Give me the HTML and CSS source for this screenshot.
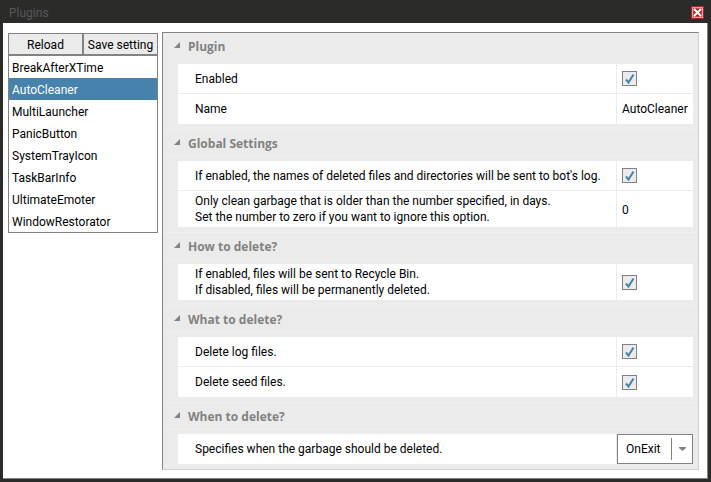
FILE: index.html
```html
<!DOCTYPE html>
<html lang="en">
<head>
<meta charset="utf-8">
<title>Plugins</title>
<link rel="stylesheet" href="styles.css">
</head>
<body>
<div class="window">
  <header class="titlebar">
    <h1>Plugins</h1>
    <button class="close" type="button" aria-label="Close">
      <svg viewBox="0 0 13 13" width="13" height="13">
        <rect x=".5" y=".5" width="12" height="12" fill="#c44a48" stroke="#a02a2a"/>
        <rect x="1.5" y="1.5" width="10" height="10" fill="none" stroke="#e39a98"/>
        <path d="M4 4l5 5M9 4l-5 5" stroke="#7d2526" stroke-width="4"/>
        <path d="M3 3l7 7M10 3l-7 7" stroke="#fff" stroke-width="2"/>
      </svg>
    </button>
  </header>
  <main class="content">
    <aside class="sidebar">
      <div class="actions">
        <button type="button">Reload</button>
        <button type="button">Save setting</button>
      </div>
      <ul class="plugins">
        <li>BreakAfterXTime</li>
        <li class="selected">AutoCleaner</li>
        <li>MultiLauncher</li>
        <li>PanicButton</li>
        <li>SystemTrayIcon</li>
        <li>TaskBarInfo</li>
        <li>UltimateEmoter</li>
        <li>WindowRestorator</li>
      </ul>
    </aside>
    <div class="panel">
      <section>
        <h2><svg class="arrow" viewBox="0 0 6 6"><path d="M6 0v6H0z"/></svg>Plugin</h2>
        <div class="rows">
          <div class="row"><label for="enabled">Enabled</label><div class="value"><input id="enabled" type="checkbox" checked></div></div>
          <div class="row"><span class="name">Name</span><div class="value">AutoCleaner</div></div>
        </div>
      </section>
      <section>
        <h2><svg class="arrow" viewBox="0 0 6 6"><path d="M6 0v6H0z"/></svg>Global Settings</h2>
        <div class="rows">
          <div class="row"><label for="log">If enabled, the names of deleted files and directories will be sent to bot's log.</label><div class="value"><input id="log" type="checkbox" checked></div></div>
          <div class="row"><label for="days">Only clean garbage that is older than the number specified, in days.<br>Set the number to zero if you want to ignore this option.</label><div class="value"><input id="days" type="text" value="0"></div></div>
        </div>
      </section>
      <section>
        <h2><svg class="arrow" viewBox="0 0 6 6"><path d="M6 0v6H0z"/></svg>How to delete?</h2>
        <div class="rows">
          <div class="row"><label for="recycle">If enabled, files will be sent to Recycle Bin.<br>If disabled, files will be permanently deleted.</label><div class="value"><input id="recycle" type="checkbox" checked></div></div>
        </div>
      </section>
      <section>
        <h2><svg class="arrow" viewBox="0 0 6 6"><path d="M6 0v6H0z"/></svg>What to delete?</h2>
        <div class="rows">
          <div class="row"><label for="logs">Delete log files.</label><div class="value"><input id="logs" type="checkbox" checked></div></div>
          <div class="row"><label for="seeds">Delete seed files.</label><div class="value"><input id="seeds" type="checkbox" checked></div></div>
        </div>
      </section>
      <section>
        <h2><svg class="arrow" viewBox="0 0 6 6"><path d="M6 0v6H0z"/></svg>When to delete?</h2>
        <div class="rows">
          <div class="row"><label for="when">Specifies when the garbage should be deleted.</label><div class="value select-cell"><select id="when"><option>OnExit</option></select><svg class="chevron" viewBox="0 0 22 22"><path d="M.5 0v22" stroke="#828282"/><path d="M8 9h7v1l-3.500 3L8 10z" fill="#828282"/></svg></div></div>
        </div>
      </section>
    </div>
  </main>
</div>
</body>
</html>
```
FILE: styles.css
```css
* { box-sizing: border-box; }

body {
  margin: 0;
  background: #2b2b2a;
  color: #000;
  font: 12px/16px Roboto, "Open Sans", sans-serif;
}

button, input, select { font: inherit; color: inherit; margin: 0; }

.window {
  min-height: 100vh;
  padding: 0 3px 3px;
  display: flex;
  flex-direction: column;
}

.titlebar {
  height: 23px;
  padding: 2px 4px 0 6px;
  display: flex;
  align-items: center;
  justify-content: space-between;
}

.titlebar h1 { margin: 0; font-size: 12px; font-weight: 400; color: #585858; }

.close { border: 0; padding: 0; background: none; display: flex; }

.content {
  flex: 1;
  background: #fff;
  border: solid #828282;
  border-width: 0 1px 1px 0;
  padding: 9px 8px 8px 5px;
  display: flex;
  align-items: flex-start;
  gap: 4px;
}

.sidebar { flex: 0 0 150px; padding-top: 1px; }

.actions { display: flex; }

.actions button {
  flex: 1 0 75px;
  height: 22px;
  padding: 2px 0 0;
  border: 1px solid #828282;
  background: #ebebeb;
  white-space: nowrap;
}

.plugins {
  list-style: none;
  margin: 0;
  padding: 0;
  border: 1px solid #828282;
}

.plugins li { padding: 4px 3px 2px; }

.plugins .selected { background: #4682ab; color: #fff; }

.panel {
  flex: 1;
  min-width: 0;
  background: #ebebeb;
  border: 1px solid;
  border-color: #828282 #d0d0d0 #d0d0d0 #828282;
}

section { padding: 0 5px 5px 0; }

h2 {
  margin: 0 -5px 4px 0;
  height: 28px;
  padding: 2px 0 0 11px;
  border: solid #f0f0f0;
  border-width: 1px 0;
  display: flex;
  align-items: center;
  font-family: "Open Sans", sans-serif;
  font-size: 12px;
  font-weight: 700;
  color: #828282;
}

section:first-child h2 { height: 27px; border-top: 0; border-color: transparent; }

.arrow { width: 6px; height: 6px; margin: 0 8px 4px 0; fill: #828282; }

.rows { margin-left: 15px; }

.row {
  display: grid;
  grid-template-columns: 1fr 76px;
  column-gap: 1px;
  min-height: 30px;
}

.row:not(:last-child) { padding-bottom: 1px; }

.row label, .name {
  background: #fff;
  padding: 2px 0 2px 17px;
  align-content: center;
}

.value {
  background: #fff;
  display: flex;
  align-items: center;
  padding-left: 5px;
}

.value input[type="text"] { width: 100%; border: 0; padding: 2px 0 0; background: none; }

input[type="checkbox"] {
  appearance: none;
  width: 15px;
  height: 15px;
  border: 1px solid #828282;
  background: #ebebeb url("data:image/svg+xml,%3Csvg xmlns='http://www.w3.org/2000/svg' viewBox='0 0 13 13'%3E%3Cpath d='M3 7.500L5.500 10.500L10.500 2.500' fill='none' stroke='%234682ab' stroke-width='2'/%3E%3C/svg%3E");
}

.select-cell { position: relative; padding: 0; }

select {
  appearance: none;
  width: 100%;
  height: 30px;
  padding: 0 8px;
  border: 1px solid #828282;
  border-radius: 0;
  background: #fff;
}

.chevron {
  position: absolute;
  right: 0;
  top: 4px;
  width: 22px;
  height: 22px;
  pointer-events: none;
}
```
